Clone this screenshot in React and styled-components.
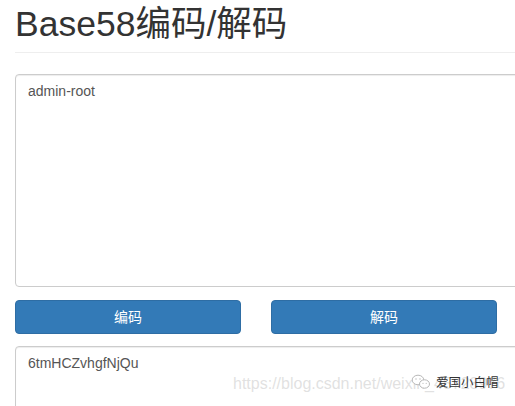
import React from "react";
import styled, { createGlobalStyle } from "styled-components";

const Global = createGlobalStyle`
  html, body { margin: 0; padding: 0; background: #fff; overflow: hidden; }
  body {
    font-family: "Liberation Sans", Arial, "Noto Sans CJK SC", sans-serif;
    font-size: 14px;
    line-height: 1.42857;
    color: #333;
  }
`;

const Page = styled.div`
  position: relative;
  width: 515px;
  height: 406px;
  overflow: hidden;
`;

const Container = styled.div`
  padding: 0 0 0 15px;
  width: 700px;
`;

const Header = styled.h1`
  margin: 4px 0 0;
  padding-bottom: 8px;
  border-bottom: 1px solid #eee;
  font-family: "Liberation Sans", Arial, "Noto Sans CJK SC", sans-serif;
  font-weight: 400;
  font-size: 35.5px;
  line-height: 40px;
  color: #333;
`;

const Area = styled.textarea`
  display: block;
  box-sizing: border-box;
  width: 620px;
  height: ${(p) => p.$h}px;
  margin: ${(p) => p.$mt}px 0 0;
  padding: 6px 12px;
  border: 1px solid #ccc;
  border-radius: 4px;
  box-shadow: inset 0 1px 1px rgba(0, 0, 0, 0.075);
  font-family: "Liberation Sans", Arial, "Noto Sans CJK SC", sans-serif;
  font-size: 14px;
  line-height: 20px;
  color: #555;
  background: #fff;
  resize: none;
  outline: none;
`;

const ButtonRow = styled.div`
  display: grid;
  grid-template-columns: 226px 226px;
  column-gap: 30px;
  margin-top: 13px;
`;

const Button = styled.button`
  box-sizing: border-box;
  height: 34px;
  padding: 6px 12px;
  border: 1px solid #2e6da4;
  border-radius: 4px;
  background: #337ab7;
  color: #fff;
  font-family: "Liberation Sans", Arial, "Noto Sans CJK SC", sans-serif;
  font-size: 14px;
  line-height: 20px;
  cursor: pointer;
`;

const Watermark = styled.div`
  position: absolute;
  left: 233px;
  top: 374px;
  font-family: "Liberation Sans", Arial, sans-serif;
  font-size: 16px;
  line-height: 20px;
  color: rgba(200, 200, 200, 0.55);
  white-space: nowrap;
  pointer-events: none;
`;

const Brand = styled.div`
  position: absolute;
  left: 411px;
  top: 374px;
  display: flex;
  align-items: center;
  gap: 3px;
  font-family: "Noto Sans CJK SC", sans-serif;
  font-size: 12.5px;
  line-height: 16px;
  color: #333;
  white-space: nowrap;
  pointer-events: none;
`;

const WeChat = () => (
  <svg width="22" height="16" viewBox="0 0 22 16" fill="none" stroke="#b8b8b8" strokeWidth="1">
    <ellipse cx="7" cy="6" rx="5.8" ry="4.8" fill="#fff" />
    <ellipse cx="13.5" cy="10" rx="5" ry="4.2" fill="#fff" />
    <circle cx="5" cy="5" r="0.7" fill="#b8b8b8" stroke="none" />
    <circle cx="9" cy="5" r="0.7" fill="#b8b8b8" stroke="none" />
    <circle cx="12" cy="9.3" r="0.6" fill="#b8b8b8" stroke="none" />
    <circle cx="15.2" cy="9.3" r="0.6" fill="#b8b8b8" stroke="none" />
  </svg>
);

export default function App() {
  return (
    <Page>
      <Global />
      <Container>
        <Header>Base58编码/解码</Header>
        <Area $mt={21} $h={213} readOnly defaultValue="admin-root" />
        <ButtonRow>
          <Button>编码</Button>
          <Button>解码</Button>
        </ButtonRow>
        <Area $mt={12} $h={213} readOnly defaultValue="6tmHCZvhgfNjQu" />
      </Container>
      <Watermark>https://blog.csdn.net/weixin_45728976</Watermark>
      <Brand>
        <WeChat />
        <span>爱国小白帽</span>
      </Brand>
    </Page>
  );
}
